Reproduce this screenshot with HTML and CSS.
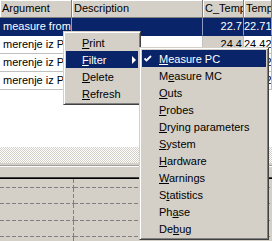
FILE: index.html
```html
<!DOCTYPE html>
<html lang="en">
<head>
  <meta charset="UTF-8">
  <title>Measurements</title>
  <link rel="stylesheet" href="styles.css">
</head>
<body>
  <div class="window">
    <!-- list of records -->
    <div class="list">
      <div class="row head">
        <div class="cell">Argument</div>
        <div class="cell">Description</div>
        <div class="cell">C_Temp</div>
        <div class="cell">Temp</div>
      </div>
      <div class="row sel">
        <div class="cell">measure from PC</div>
        <div class="cell"></div>
        <div class="cell num">22.7</div>
        <div class="cell num">22.71</div>
      </div>
      <div class="row">
        <div class="cell">merenje iz PC</div>
        <div class="cell"></div>
        <div class="cell num ro">24.4</div>
        <div class="cell num">24.42</div>
      </div>
      <div class="row">
        <div class="cell">merenje iz PC</div>
        <div class="cell"></div>
        <div class="cell num ro">24.4</div>
        <div class="cell num">24.42</div>
      </div>
      <div class="row">
        <div class="cell">merenje iz PC</div>
        <div class="cell"></div>
        <div class="cell num ro">24.4</div>
        <div class="cell num">24.42</div>
      </div>
    </div>

    <div class="splitter"></div>
    <div class="band"></div>

    <!-- chart grid -->
    <div class="chart">
      <div class="gc"></div><div class="gc"></div>
      <div class="gc"></div><div class="gc"></div>
      <div class="gc"></div><div class="gc"></div>
      <div class="gc"></div><div class="gc"></div>
      <div class="gc last"></div><div class="gc last"></div>
    </div>

    <!-- context menu -->
    <div class="menu main">
      <div class="item"><span class="mark"></span><span><u>P</u>rint</span></div>
      <div class="item hot"><span class="mark"></span><span><u>F</u>ilter</span><span class="arrow"></span></div>
      <div class="item"><span class="mark"></span><span><u>D</u>elete</span></div>
      <div class="item"><span class="mark"></span><span><u>R</u>efresh</span></div>
    </div>

    <div class="menu sub">
      <div class="item hot"><span class="mark"><svg width="8" height="8" viewBox="0 0 8 8"><path d="M0.5 3.5 L2.5 5.5 L7 1" fill="none" stroke="#fff" stroke-width="1.8"/></svg></span><span><u>M</u>easure PC</span></div>
      <div class="item"><span class="mark"></span><span>M<u>e</u>asure MC</span></div>
      <div class="item"><span class="mark"></span><span><u>O</u>uts</span></div>
      <div class="item"><span class="mark"></span><span><u>P</u>robes</span></div>
      <div class="item"><span class="mark"></span><span><u>D</u>rying parameters</span></div>
      <div class="item"><span class="mark"></span><span><u>S</u>ystem</span></div>
      <div class="item"><span class="mark"></span><span><u>H</u>ardware</span></div>
      <div class="item"><span class="mark"></span><span><u>W</u>arnings</span></div>
      <div class="item"><span class="mark"></span><span>S<u>t</u>atistics</span></div>
      <div class="item"><span class="mark"></span><span>Ph<u>a</u>se</span></div>
      <div class="item"><span class="mark"></span><span>De<u>b</u>ug</span></div>
    </div>
  </div>
</body>
</html>
```

FILE: styles.css
```css
body {
  margin: 0;
  background: #d4d0c8;
  font-family: "Liberation Sans", Arial, sans-serif;
  font-size: 11px;
  color: #000;
  overflow: hidden;
}

.window {
  position: relative;
  width: 272px;
  height: 241px;
  overflow: hidden;
}

/* list */
.list {
  height: 147px;
  background: #fff;
}

.row {
  display: grid;
  grid-template-columns: 72px 131px 41px 1fr;
  height: 18px;
}

.cell {
  border-right: 1px solid #c0c0c0;
  border-bottom: 1px solid #c0c0c0;
  padding: 0 2px 0 3px;
  line-height: 17px;
  white-space: nowrap;
  overflow: hidden;
}

.num {
  text-align: right;
  padding: 0 1px 0 0;
}

.head .cell {
  background: #d4d0c8;
  border-color: #808080;
  box-shadow: inset 1px 1px #fff;
  padding-left: 2px;
}

.sel .cell {
  background: #0a246a;
  color: #fff;
  border-right-color: #8d9cc4;
  border-bottom-color: #0a246a;
}

.ro {
  background: #d4d0c8;
}

.splitter {
  height: 16px;
  background: repeating-conic-gradient(#d4d0c8 0 25%, #fff 0 50%) 0 0 / 2px 2px;
}

.band {
  height: 16px;
  background: linear-gradient(#d4d0c8 0 2px, #a0a0a0 2px 3px, #fff 3px 4px, #d4d0c8 4px 14px, #404040 14px 15px, #000 15px 16px);
}

/* chart */
.chart {
  display: grid;
  grid-template-columns: 74px 1fr;
  grid-template-rows: 9px 16px 17px 16px 1fr;
  height: 62px;
}

.gc {
  background: repeating-linear-gradient(90deg, #808080 0 4px, transparent 4px 6px) left bottom / 100% 1px no-repeat;
}

.gc:nth-child(odd) {
  background:
    repeating-linear-gradient(90deg, #808080 0 4px, transparent 4px 6px) left bottom / 100% 1px no-repeat,
    repeating-linear-gradient(180deg, #808080 0 4px, transparent 4px 6px) right top / 1px 100% no-repeat;
}

.gc.last {
  background: none;
}

.gc.last:nth-child(odd) {
  background: repeating-linear-gradient(180deg, #808080 0 4px, transparent 4px 6px) right top / 1px 100% no-repeat;
}

/* menus */
.menu {
  position: absolute;
  background: #d4d0c8;
  border: 1px solid;
  border-color: #d4d0c8 #404040 #404040 #d4d0c8;
  box-shadow: inset 1px 1px #fff, inset -1px -1px #808080;
  padding: 2px;
}

.main {
  left: 63px;
  top: 31px;
  width: 72px;
}

.sub {
  left: 139px;
  top: 47px;
  width: 124px;
}

.item {
  display: flex;
  align-items: center;
  height: 17px;
  white-space: nowrap;
}

.item u {
  text-decoration-thickness: 1px;
  text-underline-offset: 1px;
}

.mark {
  width: 16px;
  flex: none;
  display: flex;
  align-items: center;
  padding-left: 2px;
  box-sizing: border-box;
}

.sub .mark {
  width: 17px;
}

.hot {
  background: #0a246a;
  color: #fff;
}

.arrow {
  margin-left: auto;
  margin-right: 2px;
  width: 0;
  height: 0;
  border-top: 4px solid transparent;
  border-bottom: 4px solid transparent;
  border-left: 4px solid #fff;
}
```
